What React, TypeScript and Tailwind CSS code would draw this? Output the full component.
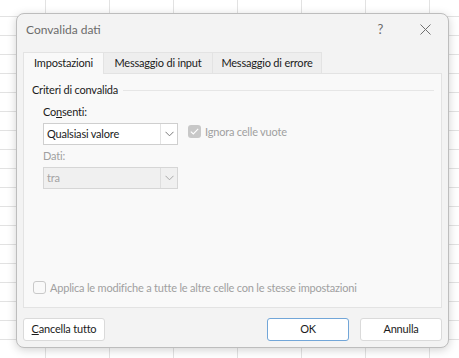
import React from "react";

const font = "font-['Lato',_'Noto_Sans',_sans-serif]";

function Chevron({ color }: { color: string }) {
  return (
    <svg width="9" height="6" viewBox="0 0 9 6" fill="none">
      <polyline points="0.5,0.8 4.5,4.8 8.5,0.8" stroke={color} strokeWidth="1" />
    </svg>
  );
}

function Select({ value, disabled }: { value: string; disabled?: boolean }) {
  return (
    <div
      className={`flex h-[22px] w-[135px] items-stretch border ${
        disabled ? "border-[#d6d6d6] bg-[#f0f0f0] text-[#a3a3a3]" : "border-[#cfcfcf] bg-white text-[#1b1b1b]"
      }`}
    >
      <div className="flex flex-1 items-center pl-[3px] leading-none">{value}</div>
      <div className={`flex w-[17px] items-center justify-center border-l ${disabled ? "border-[#dedede]" : "border-[#e3e3e3]"}`}>
        <Chevron color={disabled ? "#a8a8a8" : "#7a7a7a"} />
      </div>
    </div>
  );
}

function Button({ children, primary }: { children: React.ReactNode; primary?: boolean }) {
  return (
    <button
      className={`flex h-[23px] w-[82px] items-center justify-center whitespace-nowrap rounded-[3px] border bg-white text-[#1b1b1b] ${
        primary ? "border-[#72a6d8]" : "border-[#dadada]"
      }`}
    >
      {children}
    </button>
  );
}

export default function App() {
  return (
    <div
      className={`h-[358px] w-[459px] overflow-hidden bg-white bg-[linear-gradient(to_right,#e2e2e2_1px,transparent_1px),linear-gradient(to_bottom,#e2e2e2_1px,transparent_1px)] bg-[size:64px_19px] bg-[position:45px_16px] pl-[16px] pt-[13px] text-[11px] tracking-[-0.2px] ${font}`}
    >
      <div className="flex h-[335px] w-[433px] flex-col rounded-[8px] border border-[#bdbdbd] bg-[#f3f3f3] shadow-[0_2px_10px_rgba(0,0,0,0.18)]">
        {/* title bar */}
        <div className="flex h-[32px] items-center pl-[9px] pr-[17px]">
          <span className="flex-1 text-[12px] tracking-normal text-[#6b6b6b]">Convalida dati</span>
          <span className="mr-[37px] text-[13px] text-[#6b6b6b]">?</span>
          <svg width="11" height="11" viewBox="0 0 11 11" className="mb-[1px]">
            <path d="M0.5 0.5 L10.5 10.5 M10.5 0.5 L0.5 10.5" stroke="#707070" strokeWidth="1" />
          </svg>
        </div>

        {/* tabs */}
        <div className="mt-[6px] flex h-[22px] whitespace-nowrap px-[6px] text-[#1b1b1b]">
          <div className="relative z-10 flex w-[81px] items-center justify-center border border-b-0 border-[#e3e3e3] bg-[#f9f9f9]">
            Impostazioni
          </div>
          <div className="flex w-[109px] items-center justify-center border border-l-0 border-b-0 border-[#e3e3e3] bg-[#eeeeee]">
            Messaggio di input
          </div>
          <div className="flex w-[109px] items-center justify-center border border-l-0 border-b-0 border-[#e3e3e3] bg-[#eeeeee]">
            Messaggio di errore
          </div>
        </div>

        {/* panel */}
        <div className="-mt-px mx-[6px] flex h-[235px] flex-col border border-[#e3e3e3] bg-[#f9f9f9] text-[#1b1b1b]">
          <div className="mt-[8px] flex items-center pl-[8px] pr-[7px]">
            <span>Criteri di convalida</span>
            <div className="ml-[5px] h-px flex-1 bg-[#e6e6e6]" />
          </div>

          <div className="mt-[5px] flex items-start pl-[19px]">
            <div className="flex flex-col">
              <span className="h-[18px]">
                Co<u>n</u>senti:
              </span>
              <div className="mt-[1px]">
                <Select value="Qualsiasi valore" />
              </div>
              <span className="mt-[3px] h-[18px] text-[#a0a0a0]">Dati:</span>
              <div className="mt-[1px]">
                <Select value="tra" disabled />
              </div>
            </div>
            <div className="ml-[10px] mt-[20px] flex items-center text-[#a0a0a0]">
              <div className="flex h-[13px] w-[13px] items-center justify-center rounded-[3px] bg-[#c8c8c8]">
                <svg width="9" height="7" viewBox="0 0 9 7" fill="none">
                  <polyline points="0.8,3.6 3.3,6 8.2,0.9" stroke="#ffffff" strokeWidth="1.1" />
                </svg>
              </div>
              <span className="ml-[4px]">Ignora celle vuote</span>
            </div>
          </div>

          <div className="mt-auto mb-[11px] flex items-center whitespace-nowrap pl-[9px] text-[#a0a0a0]">
            <div className="h-[13px] w-[13px] rounded-[3px] border border-[#c9c9c9] bg-[#f9f9f9]" />
            <span className="ml-[4px]">Applica le modifiche a tutte le altre celle con le stesse impostazioni</span>
          </div>
        </div>

        {/* buttons */}
        <div className="mt-[10px] flex px-[6px]">
          <Button>
            <u>C</u>ancella tutto
          </Button>
          <div className="flex-1" />
          <Button primary>OK</Button>
          <div className="w-[11px]" />
          <Button>Annulla</Button>
        </div>
      </div>
    </div>
  );
}
